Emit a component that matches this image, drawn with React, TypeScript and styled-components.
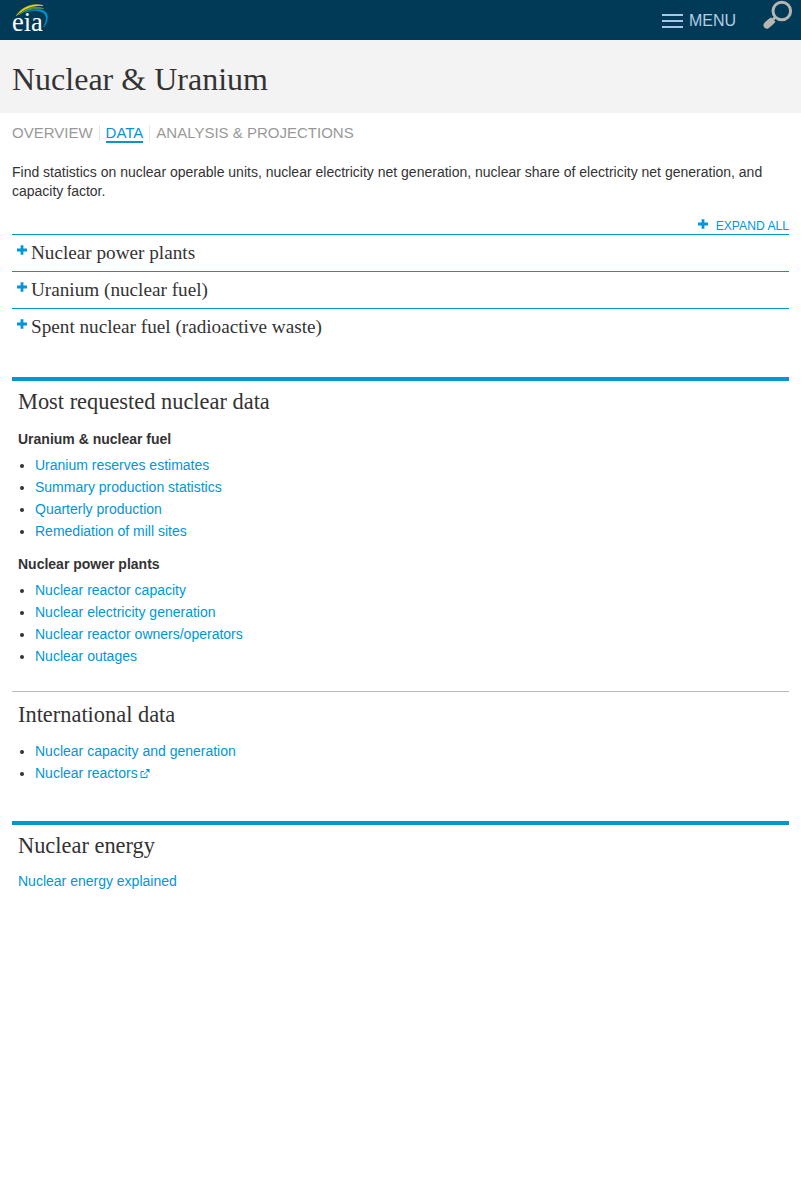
import React from "react";
import styled, { createGlobalStyle } from "styled-components";

const sans = '"Liberation Sans", Arial, sans-serif';
const serif = '"Liberation Serif", "Times New Roman", serif';
const blue = "#0096d7";

const GlobalStyle = createGlobalStyle`
  * { box-sizing: border-box; }
  body { margin: 0; background: #fff; color: #333; font: 14px/19px ${sans}; }
  h1, h2, h3, p, ul { margin: 0; padding: 0; font-weight: normal; }
  a { color: ${blue}; text-decoration: none; }
`;

const TopBar = styled.header`
  height: 40px;
  padding: 0 8px 0 12px;
  background: #003a57;
  display: flex;
  align-items: flex-start;
  svg { display: block; }
`;

const MenuButton = styled.div`
  display: flex;
  align-items: center;
  gap: 6px;
  height: 41px;
  margin: 0 27px 0 auto;
  color: #b3cde3;
  font-size: 16px;
`;

const TitleBand = styled.div`
  height: 73px;
  padding: 20px 12px 0;
  background: #f3f3f3;
`;

const PageTitle = styled.h1`
  font: 32px/38px ${serif};
`;

const Tabs = styled.nav`
  display: flex;
  padding: 11px 12px 0;
  height: 50px;
`;

const Tab = styled.a<{ $active?: boolean }>`
  height: 17px;
  font-size: 15px;
  line-height: 18px;
  color: ${(p) => (p.$active ? blue : "#999")};
  box-shadow: ${(p) => (p.$active ? `0 2px 0 ${blue}` : "none")};
`;

const TabDivider = styled.span`
  width: 1px;
  height: 16px;
  margin: 1px 6px 0;
  background: #e6e6e6;
`;

const Main = styled.main`
  padding: 0 12px;
`;

const Intro = styled.p`
  height: 54px;
`;

const ExpandAll = styled.a`
  display: flex;
  justify-content: flex-end;
  align-items: flex-start;
  gap: 8px;
  height: 17px;
  font-size: 12.15px;
  line-height: 18px;
  svg { margin-top: 2px; }
`;

const AccordionRow = styled.div`
  display: flex;
  height: 37px;
  padding: 10px 5px 0;
  gap: 4px;
  border-top: 1px solid ${blue};
`;

const AccordionTitle = styled.h2`
  font: 19.2px/16px ${serif};
`;

const Section = styled.section<{ $thin?: boolean; $height: number }>`
  height: ${(p) => p.$height}px;
  padding: 0 6px;
  border-top: ${(p) => (p.$thin ? "1px solid #bbb" : `4px solid ${blue}`)};
`;

const Sections = styled.div`
  margin-top: 32px;
`;

const SectionTitle = styled.h2<{ $top?: number }>`
  height: 34px;
  padding-top: ${(p) => p.$top ?? 8}px;
  font: 22.4px/26px ${serif};
`;

const GroupTitle = styled.h3<{ $top: number }>`
  margin-top: ${(p) => p.$top}px;
  font-size: 14px;
  font-weight: bold;
  line-height: 19px;
`;

const LinkList = styled.ul<{ $top?: number }>`
  margin-top: ${(p) => p.$top ?? 5}px;
  padding-left: 17px;
  line-height: 22px;
`;

const ExplainedLink = styled.a`
  display: block;
  margin-top: 13px;
`;

const ExternalSvg = styled.svg`
  margin-left: 2px;
`;

const EiaLogo = () => (
  <svg width="40" height="40" viewBox="0 0 40 40" role="img" aria-label="eia">
    <path d="M4.5 15.5C9 8.5 19 2.5 31 5.5C21 4.8 12 8.5 4.5 15.5Z" fill="#f5d20c" stroke="#f5d20c" strokeWidth="0.7" />
    <path d="M7.5 14.5C13 8.5 21 5.5 31.5 8.5C22 7.8 14 9.5 7.5 14.5Z" fill="#5b9b3f" stroke="#5b9b3f" strokeWidth="0.8" />
    <path
      d="M13 12.2C25 7 37 9 35.3 19C34.8 22.5 33.5 25 31.5 27C34.3 22 35 18 33.2 14.8C30 10 22 9.5 13 12.2Z"
      fill="#0096d7"
      stroke="#0096d7"
      strokeWidth="0.5"
    />
    <text x="0" y="30.5" fill="#fff" fontFamily="Liberation Serif" fontSize="26.5">
      eia
    </text>
  </svg>
);

const Plus = () => (
  <svg width="10" height="10" viewBox="0 0 10 10">
    <path d="M5 0.3V9.7M0 5H10" stroke={blue} strokeWidth="2.8" />
  </svg>
);

const ExternalIcon = () => (
  <ExternalSvg width="10" height="9" viewBox="0 0 10 9" fill="none" stroke={blue}>
    <path d="M4 2.5H1V8.5H7V5.5M3.8 5.5L8.6 1" />
    <path d="M5.5 0H9.5V4Z" fill={blue} stroke="none" />
  </ExternalSvg>
);

const Links = ({ items, top, external }: { items: string[]; top?: number; external?: string }) => (
  <LinkList $top={top}>
    {items.map((item) => (
      <li key={item}>
        <a href="#">
          {item}
          {item === external && <ExternalIcon />}
        </a>
      </li>
    ))}
  </LinkList>
);

export default function App() {
  return (
    <>
      <GlobalStyle />
      <TopBar>
        <EiaLogo />
        <MenuButton>
          <svg width="21" height="14" viewBox="0 0 21 14">
            <path d="M0 1H21M0 7H21M0 13H21" stroke="#a9c6e4" strokeWidth="2" />
          </svg>
          MENU
        </MenuButton>
        <svg width="30" height="30" viewBox="0 0 30 30" fill="none" stroke="#b7b5b2">
          <circle cx="18.8" cy="11" r="8.8" strokeWidth="3" />
          <path d="M12.8 16.8L9.5 20" strokeWidth="2.6" />
          <path
            d="M8.2 17.6L12.4 21.4C12 23 8 26.2 5.6 28.2C3.2 30 -1 26.8 0.8 23.8C2.5 21.5 6.5 18.2 8.2 17.6Z"
            fill="#b7b5b2"
            stroke="none"
          />
        </svg>
      </TopBar>
      <TitleBand>
        <PageTitle>Nuclear &amp; Uranium</PageTitle>
      </TitleBand>
      <Tabs>
        <Tab>OVERVIEW</Tab>
        <TabDivider />
        <Tab $active>DATA</Tab>
        <TabDivider />
        <Tab>ANALYSIS &amp; PROJECTIONS</Tab>
      </Tabs>
      <Main>
        <Intro>
          Find statistics on nuclear operable units, nuclear electricity net generation, nuclear share of
          electricity net generation, and capacity factor.
        </Intro>
        <ExpandAll>
          <Plus />
          EXPAND ALL
        </ExpandAll>
        {["Nuclear power plants", "Uranium (nuclear fuel)", "Spent nuclear fuel (radioactive waste)"].map((t) => (
          <AccordionRow key={t}>
            <Plus />
            <AccordionTitle>{t}</AccordionTitle>
          </AccordionRow>
        ))}
        <Sections>
          <Section $height={314}>
            <SectionTitle>Most requested nuclear data</SectionTitle>
            <GroupTitle $top={15}>Uranium &amp; nuclear fuel</GroupTitle>
            <Links
              items={[
                "Uranium reserves estimates",
                "Summary production statistics",
                "Quarterly production",
                "Remediation of mill sites",
              ]}
            />
            <GroupTitle $top={13}>Nuclear power plants</GroupTitle>
            <Links
              items={[
                "Nuclear reactor capacity",
                "Nuclear electricity generation",
                "Nuclear reactor owners/operators",
                "Nuclear outages",
              ]}
            />
          </Section>
          <Section $thin $height={130}>
            <SectionTitle $top={10}>International data</SectionTitle>
            <Links
              top={14}
              items={["Nuclear capacity and generation", "Nuclear reactors"]}
              external="Nuclear reactors"
            />
          </Section>
          <Section $height={100}>
            <SectionTitle>Nuclear energy</SectionTitle>
            <ExplainedLink href="#">Nuclear energy explained</ExplainedLink>
          </Section>
        </Sections>
      </Main>
    </>
  );
}
